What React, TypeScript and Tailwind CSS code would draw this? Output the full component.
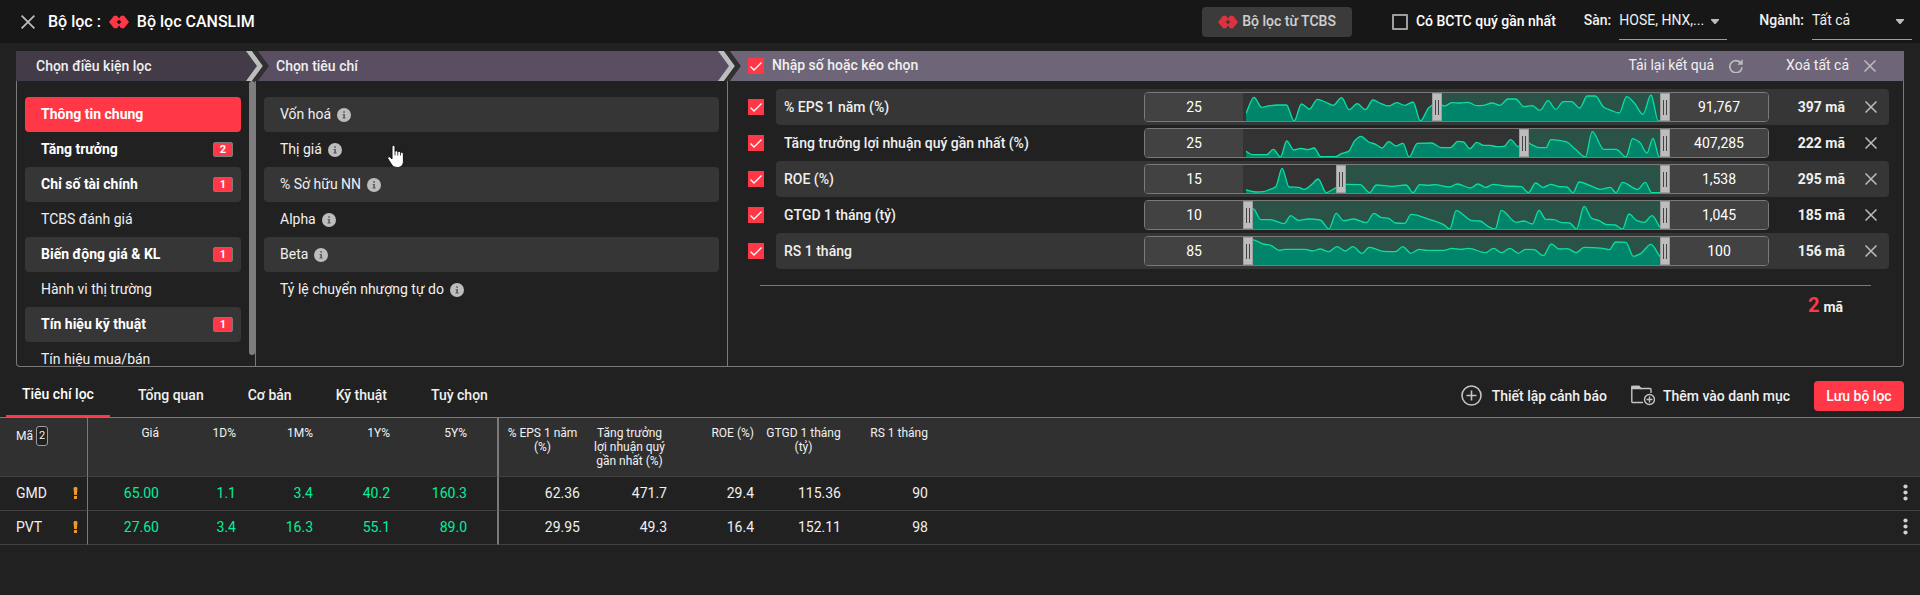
import React from "react";

type Point = [number, number];

interface Filter {
  name: string;
  low: string;
  high: string;
  count: string;
  from: number;
  shape: Point[];
}

/* Histogram outlines, drawn in a 1245 x 84 box. */
const FILTERS: Filter[] = [
  {
    name: "% EPS 1 năm (%)",
    low: "25",
    high: "91,767",
    count: "397 mã",
    from: 189,
    shape: [
      [0, 61], [24, 13], [47, 43], [71, 38], [95, 36], [121, 36], [144, 84], [166, 33], [190, 48], [214, 19],
      [237, 27], [261, 37], [286, 14], [309, 50], [333, 32], [357, 50], [380, 21], [404, 32], [427, 39], [451, 29],
      [475, 37], [500, 27], [522, 84], [546, 46], [572, 28], [594, 39], [616, 29], [641, 30], [665, 28], [690, 38],
      [712, 37], [736, 30], [760, 37], [784, 18], [807, 18], [832, 41], [856, 38], [880, 52], [904, 23], [927, 49],
      [950, 26], [974, 26], [999, 45], [1021, 9], [1046, 9], [1070, 42], [1092, 52], [1117, 60], [1139, 11],
      [1163, 31], [1188, 64], [1212, 6], [1234, 84], [1245, 84],
    ],
  },
  {
    name: "Tăng trưởng lợi nhuận quý gần nhất (%)",
    low: "25",
    high: "407,285",
    count: "222 mã",
    from: 276,
    shape: [
      [0, 67], [20, 77], [62, 77], [82, 61], [103, 84], [122, 36], [143, 63], [164, 58], [184, 62], [204, 57],
      [224, 83], [245, 83], [268, 83], [287, 73], [307, 67], [325, 36], [344, 22], [367, 39], [388, 46], [407, 57],
      [427, 38], [449, 51], [470, 43], [488, 84], [513, 43], [555, 42], [584, 56], [612, 56], [634, 37], [651, 39],
      [670, 59], [691, 40], [711, 49], [730, 49], [751, 53], [772, 52], [792, 32], [815, 53], [832, 34], [855, 47],
      [877, 56], [898, 56], [912, 32], [957, 38], [985, 60], [1016, 84], [1036, 8], [1071, 61], [1108, 61],
      [1137, 84], [1157, 29], [1178, 40], [1200, 72], [1218, 28], [1237, 84], [1245, 84],
    ],
  },
  {
    name: "ROE (%)",
    low: "15",
    high: "1,538",
    count: "295 mã",
    from: 93,
    shape: [
      [0, 75], [32, 81], [52, 80], [67, 75], [89, 65], [108, 10], [129, 66], [157, 67], [174, 73], [197, 58],
      [216, 42], [240, 83], [257, 75], [270, 68], [300, 58], [342, 59], [370, 83], [390, 60], [437, 64], [479, 60],
      [500, 83], [520, 59], [544, 61], [565, 59], [609, 66], [632, 57], [672, 69], [694, 57], [717, 67], [740, 58],
      [775, 63], [824, 65], [845, 83], [867, 54], [889, 67], [912, 58], [935, 64], [960, 66], [979, 83], [997, 51],
      [1030, 62], [1060, 73], [1090, 67], [1107, 83], [1127, 52], [1172, 73], [1195, 52], [1214, 83], [1245, 83],
    ],
  },
  {
    name: "GTGD 1 tháng (tỷ)",
    low: "10",
    high: "1,045",
    count: "185 mã",
    from: 0,
    shape: [
      [0, 60], [22, 24], [44, 56], [72, 56], [114, 68], [134, 44], [157, 58], [187, 54], [222, 57], [248, 84],
      [270, 37], [292, 59], [322, 54], [360, 65], [383, 37], [404, 49], [427, 52], [447, 66], [475, 67], [494, 40],
      [552, 56], [590, 70], [610, 84], [629, 29], [677, 59], [700, 60], [724, 76], [746, 84], [764, 28], [809, 64],
      [832, 60], [857, 69], [877, 28], [897, 55], [922, 56], [942, 64], [969, 66], [989, 84], [1012, 16], [1035, 52],
      [1057, 59], [1077, 70], [1104, 72], [1127, 84], [1146, 39], [1170, 59], [1192, 64], [1215, 44], [1240, 79],
      [1245, 82],
    ],
  },
  {
    name: "RS 1 tháng",
    low: "85",
    high: "100",
    count: "156 mã",
    from: 0,
    shape: [
      [0, 4], [27, 10], [52, 21], [74, 25], [99, 40], [117, 37], [177, 37], [199, 42], [222, 36], [247, 44],
      [272, 29], [297, 42], [320, 29], [347, 49], [369, 31], [412, 43], [447, 44], [469, 29], [494, 49], [518, 37],
      [542, 40], [592, 40], [617, 34], [642, 37], [667, 34], [717, 47], [741, 34], [765, 47], [790, 34], [815, 49],
      [837, 37], [862, 38], [890, 56], [914, 21], [937, 36], [962, 35], [988, 47], [1012, 31], [1067, 34],
      [1087, 38], [1107, 15], [1137, 16], [1159, 58], [1182, 49], [1212, 22], [1240, 59], [1245, 62],
    ],
  },
];

const CONDITIONS: { label: string; badge?: string; active?: boolean }[] = [
  { label: "Thông tin chung", active: true },
  { label: "Tăng trưởng", badge: "2" },
  { label: "Chỉ số tài chính", badge: "1" },
  { label: "TCBS đánh giá" },
  { label: "Biến động giá & KL", badge: "1" },
  { label: "Hành vi thị trường" },
  { label: "Tín hiệu kỹ thuật", badge: "1" },
  { label: "Tín hiệu mua/bán" },
];

const CRITERIA = ["Vốn hoá", "Thị giá", "% Sở hữu NN", "Alpha", "Beta", "Tỷ lệ chuyển nhượng tự do"];

const TABS = ["Tiêu chí lọc", "Tổng quan", "Cơ bản", "Kỹ thuật", "Tuỳ chọn"];

const PRICE_COLUMNS = ["Giá", "1D%", "1M%", "1Y%", "5Y%"];
const FILTER_COLUMNS = ["% EPS 1 năm (%)", "Tăng trưởng lợi nhuận quý gần nhất (%)", "ROE (%)", "GTGD 1 tháng (tỷ)", "RS 1 tháng"];

const STOCKS = [
  { code: "GMD", price: ["65.00", "1.1", "3.4", "40.2", "160.3"], values: ["62.36", "471.7", "29.4", "115.36", "90"] },
  { code: "PVT", price: ["27.60", "3.4", "16.3", "55.1", "89.0"], values: ["29.95", "49.3", "16.4", "152.11", "98"] },
];

/* Smooth curve that never overshoots its points. */
function curve(points: Point[]): string {
  const slopes = points.slice(1).map((p, i) => (p[1] - points[i][1]) / (p[0] - points[i][0]));
  const tangents = points.map((_, i) => {
    if (i === 0) return slopes[0];
    if (i === points.length - 1) return slopes[i - 1];
    const a = slopes[i - 1];
    const b = slopes[i];
    return a * b <= 0 ? 0 : (2 * a * b) / (a + b);
  });
  let d = `M${points[0][0]} ${points[0][1]}`;
  for (let i = 1; i < points.length; i++) {
    const [x0, y0] = points[i - 1];
    const [x1, y1] = points[i];
    const h = (x1 - x0) / 3;
    d += `C${x0 + h} ${y0 + tangents[i - 1] * h} ${x1 - h} ${y1 - tangents[i] * h} ${x1} ${y1}`;
  }
  return d;
}

function Logo() {
  return (
    <svg viewBox="0 0 20 14" className="h-[14px] w-5 shrink-0" fill="#ff3747" aria-hidden="true">
      <path d="M5 .8h3L10 3.400v1.300L7.600 7 10 9.300v1.300L8 13.200H5L0 7z" />
      <path d="M15 .8h-3L10 3.400v1.300L12.400 7 10 9.300v1.300l2 2.600h3L20 7z" />
    </svg>
  );
}

function Cross({ className }: { className: string }) {
  return (
    <svg viewBox="0 0 12 12" className={className} fill="none" stroke="currentColor" strokeWidth="1.500" aria-hidden="true">
      <path d="M.5.5l11 11M11.500.5l-11 11" />
    </svg>
  );
}

function Chevron({ className }: { className: string }) {
  return (
    <svg viewBox="0 0 24 30" className={className} aria-hidden="true">
      <path d="M0 0h6l11 15L6 30H0l11-15z" fill="#bdbdbd" />
      <path d="M6 0h6l11 15-11 15H6l11-15z" fill="#303030" />
      <path d="M12 0h12v30H12l11-15z" fill="currentColor" />
    </svg>
  );
}

function Info() {
  return (
    <svg viewBox="0 0 14 14" className="size-[14px]" aria-hidden="true">
      <circle cx="7" cy="7" r="7" fill="#bdbdbd" />
      <path d="M6.200 3.300h1.700v1.500H6.200zM5.500 5.900h2.400v3.700h.8v.9H5.500v-.9h.8V6.800h-.8z" fill="#5a5a5a" />
    </svg>
  );
}

function Tick({ label }: { label: string }) {
  return (
    <span className="relative flex size-4 shrink-0">
      <input type="checkbox" defaultChecked aria-label={label} className="size-4 appearance-none bg-[#ff3747]" />
      <svg viewBox="0 0 16 16" className="pointer-events-none absolute inset-0" fill="none" stroke="#fff" strokeWidth="1.300" aria-hidden="true">
        <path d="M2.500 8.500l3.500 3.500L13.500 4.500" />
      </svg>
    </span>
  );
}

function Picker({ id, label, value, className }: { id: string; label: string; value: string; className: string }) {
  return (
    <div className="flex h-10 items-center gap-2">
      <label htmlFor={id} className="font-medium">
        {label}
      </label>
      <div className={className}>
        <select id={id} defaultValue={value} className="w-full appearance-none bg-transparent text-[#f0f0f0] outline-none">
          <option>{value}</option>
        </select>
        <svg viewBox="0 0 8 5" className="pointer-events-none absolute right-2 top-[19px] h-[5px] w-2" fill="#bdbdbd" aria-hidden="true">
          <path d="M0 0h8v1L4.500 5h-1L0 1z" />
        </svg>
      </div>
    </div>
  );
}

const THUMB =
  "pointer-events-none absolute inset-0 m-0 h-full w-full appearance-none bg-transparent [&::-webkit-slider-runnable-track]:h-7 [&::-webkit-slider-thumb]:pointer-events-auto [&::-webkit-slider-thumb]:h-7 [&::-webkit-slider-thumb]:w-[10px] [&::-webkit-slider-thumb]:appearance-none [&::-webkit-slider-thumb]:border [&::-webkit-slider-thumb]:border-[#9e9e9e] [&::-webkit-slider-thumb]:bg-[#bdbdbd] [&::-webkit-slider-thumb]:bg-[linear-gradient(90deg,#424242_1px,transparent_1px,transparent_3px,#424242_3px)] [&::-webkit-slider-thumb]:bg-[length:4px_15px] [&::-webkit-slider-thumb]:bg-center [&::-webkit-slider-thumb]:bg-no-repeat";

function RangeBox({ filter }: { filter: Filter }) {
  const line = curve(filter.shape);
  return (
    <div className="flex h-[30px] w-[625px] shrink-0 overflow-hidden rounded border border-[#7a7a7a] bg-[#333333]">
      <input
        type="text"
        defaultValue={filter.low}
        aria-label={`${filter.name} từ`}
        className="w-[98px] bg-[#424242] text-center text-sm text-white outline-none"
      />
      <div className="relative flex flex-1 pl-[3px] pr-2">
        <div className="absolute inset-y-0 right-0 bg-[#2b5246]" style={{ left: `${(filter.from / 427) * 100}%` }} />
        <svg viewBox="0 0 1245 84" preserveAspectRatio="none" className="relative h-full w-full" aria-hidden="true">
          <path d={`${line}L1245 84L0 84Z`} fill="#00846a" />
          <path d={line} fill="none" stroke="#08e0a0" strokeWidth="4" />
        </svg>
        <input type="range" min="0" max="417" defaultValue={filter.from} aria-label={`${filter.name} tối thiểu`} className={THUMB} />
        <input type="range" min="0" max="417" defaultValue="417" aria-label={`${filter.name} tối đa`} className={THUMB} />
      </div>
      <input
        type="text"
        defaultValue={filter.high}
        aria-label={`${filter.name} đến`}
        className="w-[98px] bg-[#424242] text-center text-sm text-white outline-none"
      />
    </div>
  );
}

function TopBar() {
  return (
    <header className="flex h-[43px] items-center bg-[#171717] pl-[21px] pr-2">
      <button type="button" aria-label="Đóng" className="text-[#bdbdbd]">
        <Cross className="size-[14px]" />
      </button>
      <h1 className="ml-[13px] flex items-center gap-2 text-base font-medium text-white">
        <span>Bộ lọc :</span>
        <Logo />
        <span>Bộ lọc CANSLIM</span>
      </h1>
      <button type="button" className="ml-auto flex h-[30px] items-center gap-1 rounded bg-[#424242] px-4 font-medium opacity-85">
        <Logo />
        <span className="pb-0.5">Bộ lọc từ TCBS</span>
      </button>
      <label className="ml-10 flex items-center gap-2 font-medium text-white">
        <input type="checkbox" className="size-4 appearance-none rounded-[1px] border-2 border-[#9e9e9e]" />
        <span className="pb-0.5">Có BCTC quý gần nhất</span>
      </label>
      <div className="ml-7 flex gap-8 self-start">
        <Picker id="exchange" label="Sàn:" value="HOSE, HNX,..." className="relative flex h-10 w-[108px] items-center border-b border-[#9e9e9e]" />
        <Picker id="sector" label="Ngành:" value="Tất cả" className="relative flex h-10 w-[100px] items-center border-b border-[#9e9e9e]" />
      </div>
    </header>
  );
}

function FilterHead() {
  return (
    <div className="flex h-[30px] items-stretch font-medium">
      <h2 className="flex w-[230px] items-center bg-[#433b47] pl-5">Chọn điều kiện lọc</h2>
      <Chevron className="h-[30px] w-6 shrink-0 bg-[#433b47] text-[#5a4e63]" />
      <h2 className="flex w-[448px] items-center bg-[#5a4e63] pl-[6px]">Chọn tiêu chí</h2>
      <Chevron className="h-[30px] w-6 shrink-0 bg-[#5a4e63] text-[#6f6579]" />
      <div className="flex flex-1 items-center bg-[#6f6579] pl-[6px] pr-7">
        <Tick label="Chọn tất cả" />
        <h2 className="ml-2 pb-0.5">Nhập số hoặc kéo chọn</h2>
        <button type="button" className="ml-auto flex items-center gap-[15px] pb-0.5 font-normal">
          Tải lại kết quả
          <svg viewBox="0 0 14 14" className="mt-0.5 size-[14px]" fill="none" stroke="#bdbdbd" strokeWidth="1.700" aria-hidden="true">
            <path d="M12 4.300A6.100 6.100 0 1 0 13 8.400" />
            <path d="M13.700 0v5.800H8.500z" fill="#bdbdbd" stroke="none" />
          </svg>
        </button>
        <button type="button" className="ml-[43px] flex items-center gap-[15px] pb-0.5 font-normal">
          Xoá tất cả
          <Cross className="mt-0.5 size-3 text-[#bdbdbd]" />
        </button>
      </div>
    </div>
  );
}

function Conditions() {
  return (
    <nav className="relative w-[239px] shrink-0 border-r border-[#7a7a7a]">
      <ul className="h-full overflow-y-auto py-4 pl-2 pr-[14px] [scrollbar-width:none]">
        {CONDITIONS.map((c, i) => (
          <li key={c.label}>
            <button
              type="button"
              className={`flex h-[35px] w-full items-center justify-between rounded pl-4 pr-2 text-left ${
                c.active ? "bg-[#ff3747]" : i % 2 === 0 ? "bg-[#363636]" : ""
              } ${c.active || c.badge ? "font-bold text-white" : ""}`}
            >
              <span className="pb-0.5">{c.label}</span>
              {c.badge && (
                <span className="flex h-[15px] w-5 items-center justify-center rounded-[2px] border border-[#7a7a7a] bg-[#ff3747] text-[11px]">
                  {c.badge}
                </span>
              )}
            </button>
          </li>
        ))}
      </ul>
      <div className="absolute right-0 top-0 h-[274px] w-[6px] rounded-full bg-[#7e7e7e]" />
    </nav>
  );
}

function Criteria() {
  return (
    <ul className="w-[472px] shrink-0 border-r border-[#7a7a7a] py-4 pl-2 pr-2">
      {CRITERIA.map((label, i) => (
        <li
          key={label}
          className={`relative flex h-[35px] items-center gap-[6px] rounded pl-4 ${i % 2 === 0 ? "bg-[#363636]" : ""}`}
        >
          <span className="pb-0.5">{label}</span>
          <Info />
          {i === 1 && (
            <svg viewBox="0 0 17 23" className="absolute left-[123px] top-[13px] h-[23px] w-[17px]" fill="#fff" stroke="#111" strokeWidth="1" aria-hidden="true">
              <path d="M5 1.800C5-.1 8-.1 8 1.800v4.600c.6-.9 2.700-.8 2.800.5.700-.8 2.500-.6 2.700.7 1-.7 2.900-.1 2.900 1.500v7.400c0 3.600-2.100 6-5.900 6-3.300 0-4.900-1.300-6.300-3.600L1 14c-1.100-1.700.9-3 2.400-1.700L5 14z" />
              <path d="M8 6.400v4M10.800 7v3.500M13.500 7.600V10.500" strokeWidth=".8" />
            </svg>
          )}
        </li>
      ))}
    </ul>
  );
}

function Filters() {
  return (
    <section className="flex-1 pt-2">
      {FILTERS.map((f, i) => (
        <div key={f.name} className="flex h-9 items-center pl-5 pr-[14px]">
          <Tick label={f.name} />
          <div className={`ml-3 flex h-9 flex-1 items-center rounded pl-2 pr-3 ${i % 2 === 0 ? "bg-[#363636]" : ""}`}>
            <span className="flex-1 font-medium">{f.name}</span>
            <RangeBox filter={f} />
            <span className="w-[76px] text-right font-bold">{f.count}</span>
            <button type="button" aria-label={`Xoá ${f.name}`} className="ml-5 text-[#bdbdbd]">
              <Cross className="size-3" />
            </button>
          </div>
        </div>
      ))}
      <p className="mx-8 mt-4 flex items-baseline justify-end gap-1 border-t border-[#7a7a7a] pr-7 pt-[5px] font-bold">
        <span className="text-xl text-[#ff3747]">2</span>
        mã
      </p>
    </section>
  );
}

function TabBar() {
  return (
    <div className="flex h-[50px] items-stretch pl-[6px] pr-4 font-medium">
      <div role="tablist" className="flex gap-3">
        {TABS.map((t, i) => (
          <button
            key={t}
            type="button"
            role="tab"
            aria-selected={i === 0}
            className={`px-4 pt-1.5 ${i === 0 ? "border-b-2 border-[#ff3747] text-white" : ""}`}
          >
            {t}
          </button>
        ))}
      </div>
      <div className="ml-auto flex items-center gap-6 pt-[7px]">
        <button type="button" className="flex items-center gap-[10px]">
          <svg viewBox="0 0 21 21" className="size-[21px]" fill="none" stroke="#c4c4c4" strokeWidth="1.600" aria-hidden="true">
            <circle cx="10.500" cy="10.500" r="9.500" />
            <path d="M10.500 5.500v10M5.500 10.500h10" />
          </svg>
          Thiết lập cảnh báo
        </button>
        <button type="button" className="flex items-center gap-2">
          <svg viewBox="0 0 24 21" className="h-[21px] w-6" fill="none" stroke="#c4c4c4" strokeWidth="1.400" aria-hidden="true">
            <path d="M12 17.500H1.800a1 1 0 0 1-1-1V2.500a1 1 0 0 1 1-1H8l1.800 2H19a1 1 0 0 1 1 1V8" />
            <path d="M1 1.500h7l1.500 2H1z" fill="#c4c4c4" />
            <circle cx="18.500" cy="14.500" r="5" />
            <path d="M18.500 11.500v6M15.500 14.500h6" />
          </svg>
          Thêm vào danh mục
        </button>
        <button type="button" className="h-[30px] w-[90px] rounded bg-[#ff3747] text-white">
          Lưu bộ lọc
        </button>
      </div>
    </div>
  );
}

function Results() {
  return (
    <table className="w-full table-fixed border-separate border-spacing-0 border-t border-[#7a7a7a]">
      <colgroup>
        <col className="w-[88px]" />
        <col className="w-[79px]" />
        <col className="w-[77px]" />
        <col className="w-[77px]" />
        <col className="w-[77px]" />
        <col className="w-[101px]" />
        <col className="w-[89px]" />
        <col className="w-[87px]" />
        <col className="w-[87px]" />
        <col className="w-[87px]" />
        <col className="w-[87px]" />
        <col />
      </colgroup>
      <thead>
        <tr className="h-[59px] bg-[#303030] align-top text-xs leading-[14px]">
          <th className="border-b border-r border-b-[#424242] border-r-[#7a7a7a] pl-4 pt-2 text-left font-normal">
            <span className="flex items-center gap-[3px]">
              Mã
              <span className="flex h-5 w-3 items-center justify-center rounded-[3px] border border-[#9e9e9e] bg-[#212121] text-[11px]">2</span>
            </span>
          </th>
          {PRICE_COLUMNS.map((c, i) => (
            <th
              key={c}
              className={`border-b border-b-[#424242] pt-2 text-right font-normal ${i === 4 ? "border-r-2 border-r-[#7a7a7a] pr-[30px]" : "pr-2"}`}
            >
              {c}
            </th>
          ))}
          {FILTER_COLUMNS.map((c) => (
            <th key={c} className="border-b border-[#424242] pr-2 pt-2 font-normal">
              <div className="ml-auto w-fit max-w-[75px] text-center">{c}</div>
            </th>
          ))}
          <th className="border-b border-[#424242]" aria-label="Thao tác" />
        </tr>
      </thead>
      <tbody>
        {STOCKS.map((s) => (
          <tr key={s.code} className="h-[34px]">
            <td className="border-b border-r border-b-[#424242] border-r-[#7a7a7a] pb-0.5 pl-4 pr-[9px]">
              <span className="flex items-center justify-between">
                {s.code}
                <svg viewBox="0 0 5 12" className="h-3 w-[5px]" fill="#ee9a2a" aria-hidden="true">
                  <path d="M.5 1.200C.5-.4 4.500-.4 4.500 1.200L3.800 8H1.200zM1 9h3v3H1z" />
                </svg>
              </span>
            </td>
            {s.price.map((v, i) => (
              <td
                key={i}
                className={`border-b border-b-[#424242] pb-0.5 text-right text-[#00f09a] ${i === 4 ? "border-r-2 border-r-[#7a7a7a] pr-[30px]" : "pr-2"}`}
              >
                {v}
              </td>
            ))}
            {s.values.map((v, i) => (
              <td key={i} className="border-b border-[#424242] pb-0.5 pr-2 text-right">
                {v}
              </td>
            ))}
            <td className="border-b border-[#424242] pb-0.5 pr-3">
              <button type="button" aria-label={`Tuỳ chọn ${s.code}`} className="ml-auto block">
                <svg viewBox="0 0 5 17" className="h-[17px] w-[5px]" fill="#d0d0d0" aria-hidden="true">
                  <circle cx="2.500" cy="2.500" r="2.100" />
                  <circle cx="2.500" cy="8.500" r="2.100" />
                  <circle cx="2.500" cy="14.500" r="2.100" />
                </svg>
              </button>
            </td>
          </tr>
        ))}
      </tbody>
    </table>
  );
}

export default function App() {
  return (
    <div className="min-h-screen bg-[#212121] font-['Roboto','Liberation_Sans',sans-serif] text-sm text-[#f0f0f0]">
      <TopBar />
      <main>
        <div className="px-4 pt-2">
          <FilterHead />
          <div className="flex h-[286px] overflow-hidden rounded-b border border-t-0 border-[#7a7a7a]">
            <Conditions />
            <Criteria />
            <Filters />
          </div>
        </div>
        <TabBar />
        <Results />
      </main>
    </div>
  );
}
